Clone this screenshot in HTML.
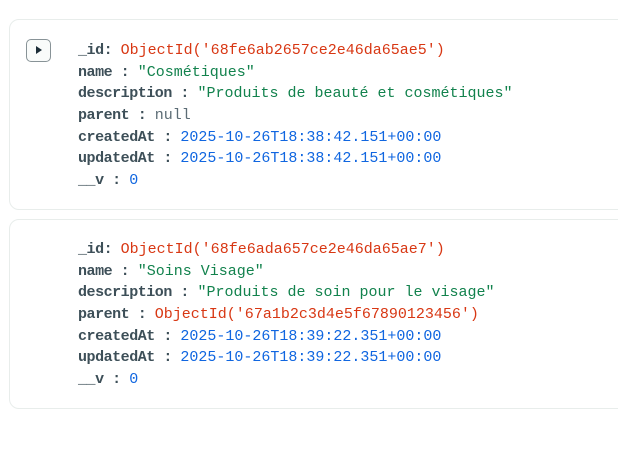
<!DOCTYPE html>
<html><head><style>
body{margin:0;background:#fff;width:618px;height:456px;overflow:hidden;font-family:"Liberation Mono",monospace;font-size:15px}
.card{position:absolute;left:9px;width:640px;border:1px solid #e8edeb;border-radius:10px;box-sizing:border-box}
.line{position:absolute;left:68px;white-space:pre;line-height:20px;color:#3d4f58}
.k{font-weight:bold;color:#3d4f58;letter-spacing:-0.47px}
.r{color:#d83713}.g{color:#12824d}.b{color:#1066e0}.n{color:#5c6c75}
.btn{position:absolute;left:16px;top:19px;width:25px;height:23px;border:1px solid #889397;border-radius:5px;background:#f9fbfa;box-sizing:border-box}
.btn:after{content:"";position:absolute;left:9px;top:6px;border-left:6px solid #1c2d38;border-top:4.5px solid transparent;border-bottom:4.5px solid transparent}
</style></head><body>
<div class="card" style="top:19px;height:191px">
<div class="btn"></div>
<div class="line" style="top:21px"><span class="k">_id: </span><span class="r">ObjectId('68fe6ab2657ce2e46da65ae5')</span></div>
<div class="line" style="top:43px"><span class="k">name : </span><span class="g">"Cosmétiques"</span></div>
<div class="line" style="top:64px"><span class="k">description : </span><span class="g">"Produits de beauté et cosmétiques"</span></div>
<div class="line" style="top:86px"><span class="k">parent : </span><span class="n">null</span></div>
<div class="line" style="top:108px"><span class="k">createdAt : </span><span class="b">2025-10-26T18:38:42.151+00:00</span></div>
<div class="line" style="top:129px"><span class="k">updatedAt : </span><span class="b">2025-10-26T18:38:42.151+00:00</span></div>
<div class="line" style="top:151px"><span class="k">__v : </span><span class="b">0</span></div>
</div>
<div class="card" style="top:219px;height:190px">
<div class="line" style="top:20px"><span class="k">_id: </span><span class="r">ObjectId('68fe6ada657ce2e46da65ae7')</span></div>
<div class="line" style="top:42px"><span class="k">name : </span><span class="g">"Soins Visage"</span></div>
<div class="line" style="top:63px"><span class="k">description : </span><span class="g">"Produits de soin pour le visage"</span></div>
<div class="line" style="top:85px"><span class="k">parent : </span><span class="r">ObjectId('67a1b2c3d4e5f67890123456')</span></div>
<div class="line" style="top:107px"><span class="k">createdAt : </span><span class="b">2025-10-26T18:39:22.351+00:00</span></div>
<div class="line" style="top:128px"><span class="k">updatedAt : </span><span class="b">2025-10-26T18:39:22.351+00:00</span></div>
<div class="line" style="top:150px"><span class="k">__v : </span><span class="b">0</span></div>
</div>
</body></html>
